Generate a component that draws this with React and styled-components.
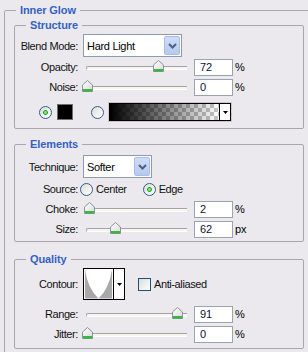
import React from "react";
import styled, { createGlobalStyle } from "styled-components";

const Global = createGlobalStyle`
  html, body { margin: 0; padding: 0; overflow: hidden; background: #ebe9ed; }
  body { font-family: "Liberation Sans", Arial, sans-serif; font-size: 11px; color: #000; }
  #root { width: 308px; height: 352px; overflow: hidden; }
`;

const Page = styled.div`
  width: 308px;
  height: 352px;
  overflow: hidden;
  box-sizing: border-box;
  padding: 4px 0 0 4px;
`;

const Group = styled.fieldset`
  box-sizing: border-box;
  min-width: 0;
  width: ${(p) => p.$w}px;
  margin: ${(p) => p.$mt || 0}px 0 0 0;
  padding: 0 0 ${(p) => p.$pb || 0}px ${(p) => p.$pl || 0}px;
  border: 1px solid #a8a7ac;
  border-radius: 2px;
`;

const Title = styled.legend`
  margin-left: ${(p) => p.$ml}px;
  padding: 0 4px;
  height: 12px;
  line-height: 12px;
  font-size: 11px;
  font-weight: bold;
  letter-spacing: -0.1px;
  color: #3561c2;
`;

const Row = styled.div`
  display: flex;
  align-items: center;
  gap: ${(p) => (p.$gap == null ? 5 : p.$gap)}px;
  height: ${(p) => p.$h}px;
  margin-top: ${(p) => p.$mt || 0}px;
  padding-left: ${(p) => p.$pl || 0}px;
`;

const Label = styled.span`
  flex: 0 0 63px;
  text-align: right;
  white-space: nowrap;
  letter-spacing: -0.4px;
  color: #111;
`;

const Text = styled.span`
  white-space: nowrap;
  letter-spacing: -0.4px;
  color: #111;
  margin-left: ${(p) => p.$ml || 0}px;
`;

const Select = styled.div`
  box-sizing: border-box;
  width: ${(p) => p.$w}px;
  height: 23px;
  display: flex;
  align-items: center;
  justify-content: space-between;
  padding: 1px 1px 1px 3px;
  background: #fff;
  border: 1px solid #8d9aae;
  letter-spacing: -0.3px;
`;

const DropButton = styled.span`
  box-sizing: border-box;
  width: 16px;
  height: 19px;
  display: flex;
  align-items: center;
  justify-content: center;
  border: 1px solid #a9bde6;
  border-radius: 2px;
  background: linear-gradient(to bottom, #cfdcf7, #b6c9ee);
`;

const SliderBox = styled.div`
  position: relative;
  width: 108px;
  height: 20px;
  display: flex;
  align-items: center;
`;

const Track = styled.div`
  flex: 1;
  margin: 1px 4px 0 3px;
  height: 2px;
  background: #f6f5ee;
  border-top: 1px solid #a3a3a3;
  border-left: 1px solid #a3a3a3;
  border-bottom: 1px solid #ffffff;
  border-radius: 2px 0 0 2px;
`;

const ThumbWrap = styled.span`
  position: absolute;
  top: 3px;
  width: 11px;
  height: 12px;
  display: flex;
`;

const ValueBox = styled.div`
  box-sizing: border-box;
  width: 39px;
  height: 17px;
  margin-left: -2px;
  padding-left: 5px;
  display: flex;
  align-items: center;
  background: #fff;
  border: 1px solid #9aa3b0;
  color: #101030;
`;

const Unit = styled.span`
  margin-left: -3px;
`;

const Radio = styled.span`
  box-sizing: border-box;
  flex: 0 0 13px;
  width: 13px;
  height: 13px;
  border-radius: 50%;
  border: 1px solid #2f5d8f;
  background: ${(p) =>
    p.$on
      ? "radial-gradient(circle at 50% 50%, #7ee07e 0 1px, #21a121 2px, transparent 2.8px), linear-gradient(135deg, #dcdcd6, #ffffff)"
      : "linear-gradient(135deg, #dcdcd6, #ffffff)"};
`;

const Check = styled.span`
  box-sizing: border-box;
  flex: 0 0 13px;
  width: 13px;
  height: 13px;
  border: 1px solid #1c5180;
  background: linear-gradient(135deg, #dcdcd6, #ffffff);
`;

const Swatch = styled.span`
  box-sizing: border-box;
  width: 16px;
  height: 16px;
  background: #000;
  border: 1px solid #6e6e6e;
`;

const GradientBox = styled.div`
  box-sizing: border-box;
  width: 122px;
  height: 18px;
  display: flex;
  border: 1px solid #000;
  box-shadow: 0 0 0 1px #c9c9c9;
  background: #fff;
`;

const GradientFill = styled.span`
  flex: 1;
  background: linear-gradient(to right, #000 0%, rgba(0, 0, 0, 0) 100%),
    conic-gradient(#c4c4c4 25%, #ffffff 0 50%, #c4c4c4 0 75%, #ffffff 0) 0 0 / 8px 8px;
`;

const ArrowCell = styled.span`
  flex: 0 0 10px;
  display: flex;
  align-items: center;
  justify-content: center;
  border-left: 1px solid #000;
  background: #fff;
`;

const ContourBox = styled.div`
  box-sizing: border-box;
  width: 42px;
  height: 32px;
  display: flex;
  border: 1px solid #000;
  background: #fff;
`;

const Spacer = styled.span`
  width: ${(p) => p.$w}px;
`;

const Chevron = () => (
  <svg width="9" height="6" viewBox="0 0 9 6">
    <path d="M1 1 L4.5 4.5 L8 1" fill="none" stroke="#4d5f86" strokeWidth="2" />
  </svg>
);

const Tri = () => (
  <svg width="5" height="3" viewBox="0 0 5 3">
    <path d="M0 0 H5 L2.5 3 Z" fill="#000" />
  </svg>
);

const Thumb = () => (
  <svg width="11" height="12" viewBox="0 0 11 12">
    <defs>
      <linearGradient id="tg" x1="0" y1="0" x2="1" y2="1">
        <stop offset="0" stopColor="#ffffff" />
        <stop offset="1" stopColor="#d8d8d4" />
      </linearGradient>
    </defs>
    <path d="M0.5 5 L5.5 0.5 L10.5 5 L10.5 11.5 L0.5 11.5 Z" fill="url(#tg)" stroke="#8593a6" />
    <rect x="1" y="9" width="9" height="2.5" fill="#3cb63c" />
  </svg>
);

const ContourThumb = () => (
  <svg width="30" height="30" viewBox="0 0 30 30">
    <rect width="30" height="30" fill="#fff" />
    <path d="M1 0 Q4 20 15 30 L1 30 Z" fill="#a9a9a9" />
    <path d="M29 0 Q26 20 15 30 L29 30 Z" fill="#a9a9a9" />
  </svg>
);

function Slider({ label, pos, value, unit = "%", mt = 0 }) {
  return (
    <Row $h={20} $mt={mt}>
      <Label>{label}</Label>
      <SliderBox>
        <Track />
        <ThumbWrap style={{ left: `${Math.round(4 + pos * 99 - 5)}px` }}>
          <Thumb />
        </ThumbWrap>
      </SliderBox>
      <ValueBox>{value}</ValueBox>
      <Unit>{unit}</Unit>
    </Row>
  );
}

export default function App() {
  return (
    <>
      <Global />
      <Page>
        <Group $w={340} $pl={9} $pb={20}>
          <Title $ml={2}>Inner Glow</Title>

          <Group $w={290} $mt={3} $pb={7}>
            <Title $ml={11}>Structure</Title>
            <Row $h={23} $mt={3}>
              <Label>Blend Mode:</Label>
              <Select $w={99}>
                Hard Light
                <DropButton>
                  <Chevron />
                </DropButton>
              </Select>
            </Row>
            <Slider label="Opacity:" pos={0.72} value="72" />
            <Slider label="Noise:" pos={0} value="0" />
            <Row $h={18} $mt={6} $pl={24} $gap={5}>
              <Radio $on />
              <Swatch />
              <Spacer $w={8} />
              <Radio />
              <GradientBox>
                <GradientFill />
                <ArrowCell>
                  <Tri />
                </ArrowCell>
              </GradientBox>
            </Row>
          </Group>

          <Group $w={290} $mt={9} $pb={2}>
            <Title $ml={11}>Elements</Title>
            <Row $h={23} $mt={5}>
              <Label>Technique:</Label>
              <Select $w={69}>
                Softer
                <DropButton>
                  <Chevron />
                </DropButton>
              </Select>
            </Row>
            <Row $h={20} $mt={1} $gap={2}>
              <Label>Source:</Label>
              <Radio />
              <Text $ml={1}>Center</Text>
              <Spacer $w={12} />
              <Radio $on />
              <Text $ml={1}>Edge</Text>
            </Row>
            <Slider label="Choke:" pos={0.02} value="2" />
            <Slider label="Size:" pos={0.283} value="62" unit="px" />
          </Group>

          <Group $w={290} $mt={11} $pb={4}>
            <Title $ml={11}>Quality</Title>
            <Row $h={32} $mt={3}>
              <Label>Contour:</Label>
              <ContourBox>
                <ContourThumb />
                <ArrowCell>
                  <Tri />
                </ArrowCell>
              </ContourBox>
              <Spacer $w={3} />
              <Check />
              <Text $ml={-2}>Anti-aliased</Text>
            </Row>
            <Slider label="Range:" pos={0.91} value="91" mt={4} />
            <Slider label="Jitter:" pos={0} value="0" />
          </Group>
        </Group>
      </Page>
    </>
  );
}
